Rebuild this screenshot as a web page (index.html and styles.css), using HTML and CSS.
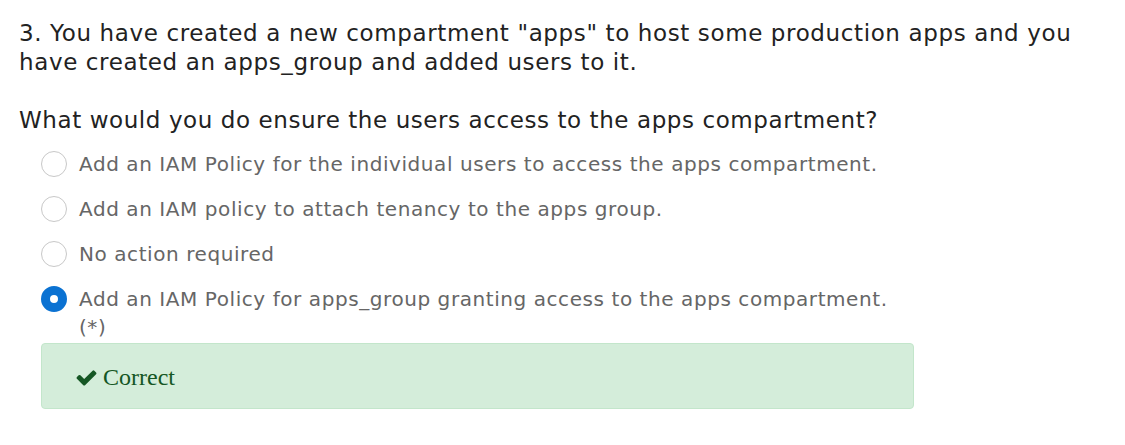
FILE: index.html
```html
<!DOCTYPE html>
<html>
<head>
<meta charset="utf-8">
<link rel="stylesheet" href="styles.css">
</head>
<body>
<div class="question">
  <p class="title">3. You have created a new compartment "apps" to host some production apps and you have created an apps_group and added users to it.</p>
  <p class="prompt">What would you do ensure the users access to the apps compartment?</p>
  <div class="answers">
    <div class="option"><span class="radio"></span><span class="label">Add an IAM Policy for the individual users to access the apps compartment.</span></div>
    <div class="option"><span class="radio"></span><span class="label">Add an IAM policy to attach tenancy to the apps group.</span></div>
    <div class="option"><span class="radio"></span><span class="label">No action required</span></div>
    <div class="option option-last"><span class="radio checked"></span><span class="label">Add an IAM Policy for apps_group granting access to the apps compartment. (*)</span></div>
    <div class="alert">
      <svg class="check" viewBox="0 0 1792 1792"><path fill="#155724" d="M1671 566q0 40-28 68l-724 724-136 136q-28 28-68 28t-68-28l-136-136-362-362q-28-28-28-68t28-68l136-136q28-28 68-28t68 28l294 295 656-657q28-28 68-28t68 28l136 136q28 28 28 68z"/></svg>
      <span>Correct</span>
    </div>
  </div>
</div>
</body>
</html>
```
FILE: styles.css
```css
html, body {
  margin: 0;
  padding: 0;
  background: #fff;
}
.question {
  padding: 19px 0 0 19px;
  font-family: "DejaVu Sans", Verdana, sans-serif;
}
.title {
  margin: 0;
  width: 1080px;
  font-size: 23px;
  letter-spacing: 0.62px;
  line-height: 29px;
  color: #222;
}
.prompt {
  margin: 29px 0 0 0;
  font-size: 23px;
  letter-spacing: 0.58px;
  line-height: 29px;
  color: #222;
}
.answers {
  width: 873px;
  margin: 15px 0 0 22px;
  display: flex;
  flex-direction: column;
}
.option {
  display: flex;
  align-items: flex-start;
  gap: 12px;
  font-size: 20px;
  letter-spacing: 0.57px;
  line-height: 28px;
  color: #666;
  margin-bottom: 17px;
}
.option-last {
  margin-bottom: 2px;
}
.radio {
  flex: none;
  box-sizing: border-box;
  width: 26px;
  height: 26px;
  border-radius: 50%;
  border: 1px solid #c8c8c8;
  background: #fff;
  margin-top: 1px;
}
.radio.checked {
  border: 9px solid #0b72d2;
}
.alert {
  box-sizing: border-box;
  height: 66px;
  display: flex;
  align-items: center;
  gap: 5px;
  padding: 3px 0 0 33px;
  background: #d4edda;
  border: 1px solid #c3e6cb;
  border-radius: 4px;
  font-family: "Liberation Serif", "Times New Roman", serif;
  font-size: 24px;
  color: #155724;
}
.check {
  width: 23px;
  height: 23px;
}
```
